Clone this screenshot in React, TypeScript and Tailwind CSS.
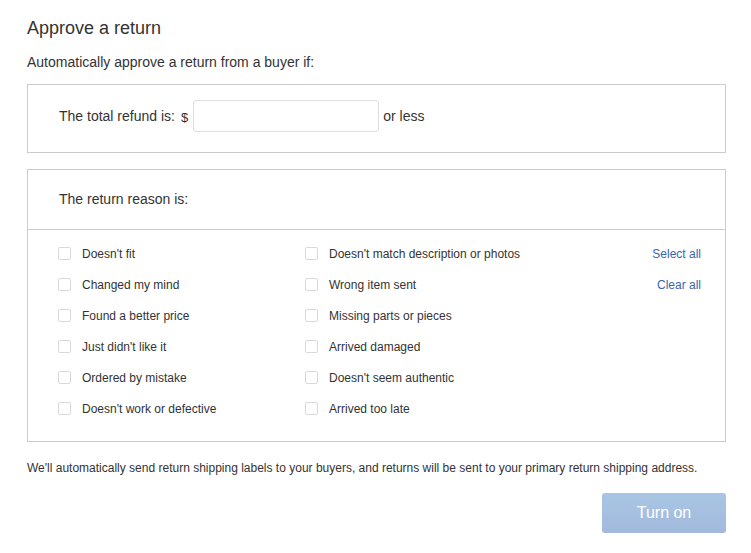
import { useState } from "react"

const leftReasons = [
  "Doesn't fit",
  "Changed my mind",
  "Found a better price",
  "Just didn't like it",
  "Ordered by mistake",
  "Doesn't work or defective",
]

const rightReasons = [
  "Doesn't match description or photos",
  "Wrong item sent",
  "Missing parts or pieces",
  "Arrived damaged",
  "Doesn't seem authentic",
  "Arrived too late",
]

function Reason({ label, checked, onToggle }: { label: string; checked: boolean; onToggle: () => void }) {
  return (
    <label className="flex h-[31px] items-center cursor-pointer">
      <input
        type="checkbox"
        checked={checked}
        onChange={onToggle}
        className="m-0 h-[13px] w-[13px] appearance-none rounded-[2px] border border-[#d9d9d9] bg-white checked:bg-[#3665b3]"
      />
      <span className="ml-[11px] text-[12px] text-[#333]">{label}</span>
    </label>
  )
}

export default function App() {
  const [checked, setChecked] = useState<Record<string, boolean>>({})
  const [amount, setAmount] = useState("")

  const toggle = (r: string) => setChecked((c) => ({ ...c, [r]: !c[r] }))
  const setAll = (v: boolean) => {
    const next: Record<string, boolean> = {}
    ;[...leftReasons, ...rightReasons].forEach((r) => (next[r] = v))
    setChecked(next)
  }

  return (
    <main className="min-h-screen bg-white pl-[27px] pr-[25px] pt-[16px] font-['Liberation_Sans',Arial,sans-serif] text-[#333]">
      <h1 className="text-[18px] leading-[24px]">Approve a return</h1>
      <p className="mt-[12px] text-[14px] leading-[20px]">Automatically approve a return from a buyer if:</p>

      {/* refund amount */}
      <div className="mt-[12px] h-[69px] border border-[#ccc] pl-[31px] pt-[15px]">
        <div className="flex items-center">
          <span className="text-[14px]">The total refund is:</span>
          <span className="ml-[6px] mt-[3px] text-[13px]">$</span>
          <input
            value={amount}
            onChange={(e) => setAmount(e.target.value)}
            className="ml-[5px] h-[32px] w-[186px] rounded-[3px] border border-[#ddd] px-2 text-[13px] outline-none"
          />
          <span className="ml-[4px] text-[14px]">or less</span>
        </div>
      </div>

      {/* return reasons */}
      <div className="mt-[16px] border border-[#ccc]">
        <div className="flex h-[60px] items-center border-b border-[#ccc] pl-[31px] text-[14px]">
          The return reason is:
        </div>
        <div className="flex pb-[17px] pl-[30px] pr-[24px] pt-[8px]">
          <div className="w-[247px]">
            {leftReasons.map((r) => (
              <Reason key={r} label={r} checked={!!checked[r]} onToggle={() => toggle(r)} />
            ))}
          </div>
          <div className="flex-1">
            {rightReasons.map((r) => (
              <Reason key={r} label={r} checked={!!checked[r]} onToggle={() => toggle(r)} />
            ))}
          </div>
          <div className="flex flex-col items-end text-[12px] text-[#3665b3]">
            <button onClick={() => setAll(true)} className="h-[31px] cursor-pointer">
              Select all
            </button>
            <button onClick={() => setAll(false)} className="h-[31px] cursor-pointer">
              Clear all
            </button>
          </div>
        </div>
      </div>

      <p className="mt-[18px] text-[12px] leading-[16px]">
        We'll automatically send return shipping labels to your buyers, and returns will be sent to your primary return shipping address.
      </p>

      <div className="mt-[17px] flex justify-end">
        <button className="h-[40px] w-[124px] rounded-[3px] bg-gradient-to-b from-[#a9c6e4] to-[#a2b9dc] text-[16px] text-white">
          Turn on
        </button>
      </div>
    </main>
  )
}
